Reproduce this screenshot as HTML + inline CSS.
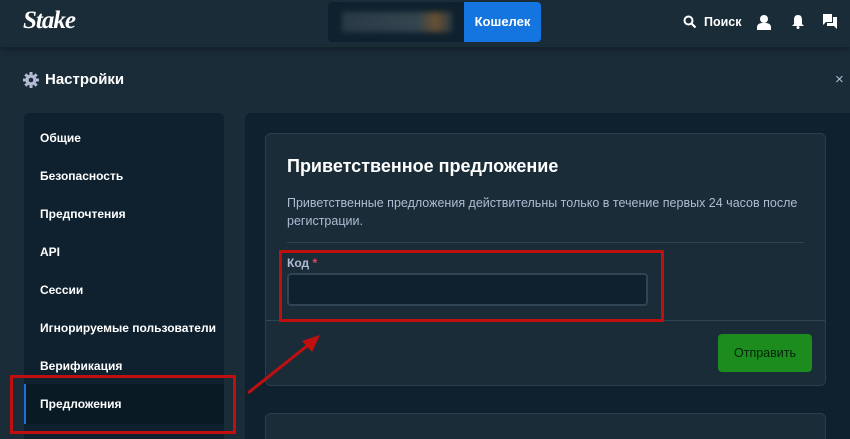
<!DOCTYPE html>
<html><head><meta charset="utf-8"><style>
*{margin:0;padding:0;box-sizing:border-box}
html,body{width:850px;height:439px;overflow:hidden}
body{background:#1a2c38;font-family:"Liberation Sans",sans-serif;color:#fff;position:relative}
.abs{position:absolute}
.hdr{left:0;top:0;width:850px;height:47px;background:#1a2c38;box-shadow:0 2px 6px rgba(0,0,0,.35)}
.side{left:24px;top:113px;width:200px;height:326px;background:#0f212e;border-radius:6px 6px 0 0}
.it{position:absolute;left:16px;font-size:12px;font-weight:bold;color:#fff}
.main{left:245px;top:113px;width:605px;height:326px;background:#0f212e;border-radius:6px 0 0 0}
.card{left:265px;top:133px;width:561px;height:253px;background:#1a2c38;border:1px solid #2a3f4d;border-radius:6px}
.red{border:3px solid #c00f0f}
</style></head><body>
<div class="abs hdr"></div>
<div class="abs" style="left:23px;top:7px;font:italic bold 25px 'Liberation Serif',serif;color:#fff;letter-spacing:-1px">Stake</div>
<div class="abs" style="left:328px;top:2px;width:136px;height:40px;background:#0f212e;border-radius:4px 0 0 4px"></div>
<div class="abs" style="left:342px;top:12px;width:110px;height:20px;background:linear-gradient(90deg,#2a3a46,#34454f 70%,#6a5030 85%,#2a3a46);filter:blur(3px)"></div>
<div class="abs" style="left:464px;top:2px;width:77px;height:40px;background:#1475e1;border-radius:0 4px 4px 0;font-size:13px;font-weight:bold;line-height:40px;text-align:center">Кошелек</div>
<svg class="abs" style="left:683px;top:15px" width="14" height="14" viewBox="0 0 14 14"><circle cx="5.5" cy="5.5" r="4" fill="none" stroke="#fff" stroke-width="2"/><path d="M8.5 8.5L12.5 12.5" stroke="#fff" stroke-width="2.2"/></svg>
<div class="abs" style="left:704px;top:15px;font-size:12.5px;font-weight:bold">Поиск</div>
<svg class="abs" style="left:757px;top:14px" width="14" height="16" viewBox="0 0 14 16"><circle cx="7" cy="5" r="4" fill="#fff"/><path d="M0 16v-3c0-2 2-4 5-4h4c3 0 5 2 5 4v3z" fill="#fff"/></svg>
<svg class="abs" style="left:792px;top:14px" width="12" height="15" viewBox="0 0 12 15"><path d="M6 1c3 0 4 2 4 5v4l2 2H0l2-2V6c0-3 1-5 4-5z" fill="#fff"/><circle cx="6" cy="13.5" r="1.5" fill="#fff"/></svg>
<svg class="abs" style="left:823px;top:14px" width="14" height="15" viewBox="0 0 14 15"><path d="M0 0h9v8H3L0 11z" fill="#fff"/><path d="M10 3h4v12l-3-3H4V9h6z" fill="#fff"/></svg>
<svg class="abs" style="left:23px;top:72px" width="16" height="16" viewBox="0 0 16 16"><g fill="#b1bad3"><circle cx="8" cy="8" r="5.5"/><rect x="6.5" y="0" width="3" height="16"/><rect x="0" y="6.5" width="16" height="3"/><rect x="6.5" y="0" width="3" height="16" transform="rotate(45 8 8)"/><rect x="6.5" y="0" width="3" height="16" transform="rotate(-45 8 8)"/></g><circle cx="8" cy="8" r="2.3" fill="#1a2c38"/></svg>
<div class="abs" style="left:45px;top:71px;font-size:15px;font-weight:bold">Настройки</div>
<div class="abs" style="left:835px;top:71px;font-size:15px;color:#b1bad3">×</div>
<div class="abs side">
<div class="it" style="top:18px">Общие</div>
<div class="it" style="top:56px">Безопасность</div>
<div class="it" style="top:94px">Предпочтения</div>
<div class="it" style="top:132px">API</div>
<div class="it" style="top:170px">Сессии</div>
<div class="it" style="top:208px">Игнорируемые пользователи</div>
<div class="it" style="top:246px">Верификация</div>
<div style="position:absolute;left:0;top:271px;width:200px;height:40px;background:#0a1a25"></div>
<div style="position:absolute;left:0;top:271px;width:2px;height:40px;background:#1475e1"></div>
<div class="it" style="top:284px">Предложения</div>
</div>
<div class="abs main"></div>
<div class="abs card">
<div class="abs" style="left:21px;top:22px;font-size:18px;font-weight:bold">Приветственное предложение</div>
<div class="abs" style="left:21px;top:60px;width:520px;font-size:12.5px;line-height:18px;color:#b1bad3">Приветственные предложения действительны только в течение первых 24 часов после регистрации.</div>
<div class="abs" style="left:21px;top:108px;width:517px;height:1px;background:#2f4553"></div>
<div class="abs" style="left:21px;top:122px;font-size:12px;font-weight:bold;color:#b1bad3">Код <span style="color:#ed4163">*</span></div>
<div class="abs" style="left:21px;top:139px;width:361px;height:33px;background:#0f212e;border:2px solid #2f4553;border-radius:4px"></div>
<div class="abs" style="left:0;top:186px;width:559px;height:1px;background:#2f4553"></div>
<div class="abs" style="left:452px;top:200px;width:94px;height:38px;background:#1c8c1e;border-radius:4px;font-size:12.5px;line-height:38px;text-align:center;color:#05250a">Отправить</div>
</div>
<div class="abs" style="left:265px;top:413px;width:561px;height:26px;background:#1a2c38;border:1px solid #2a3f4d;border-bottom:none;border-radius:6px 6px 0 0"></div>
<div class="abs red" style="left:279px;top:250px;width:385px;height:72px"></div>
<div class="abs red" style="left:10px;top:375px;width:226px;height:59px"></div>
<svg class="abs" style="left:240px;top:325px" width="90" height="75"><path d="M8 68L72 17" stroke="#c00f0f" stroke-width="3"/><path d="M80 10L62 16L72 27z" fill="#c00f0f"/></svg>
</body></html>
